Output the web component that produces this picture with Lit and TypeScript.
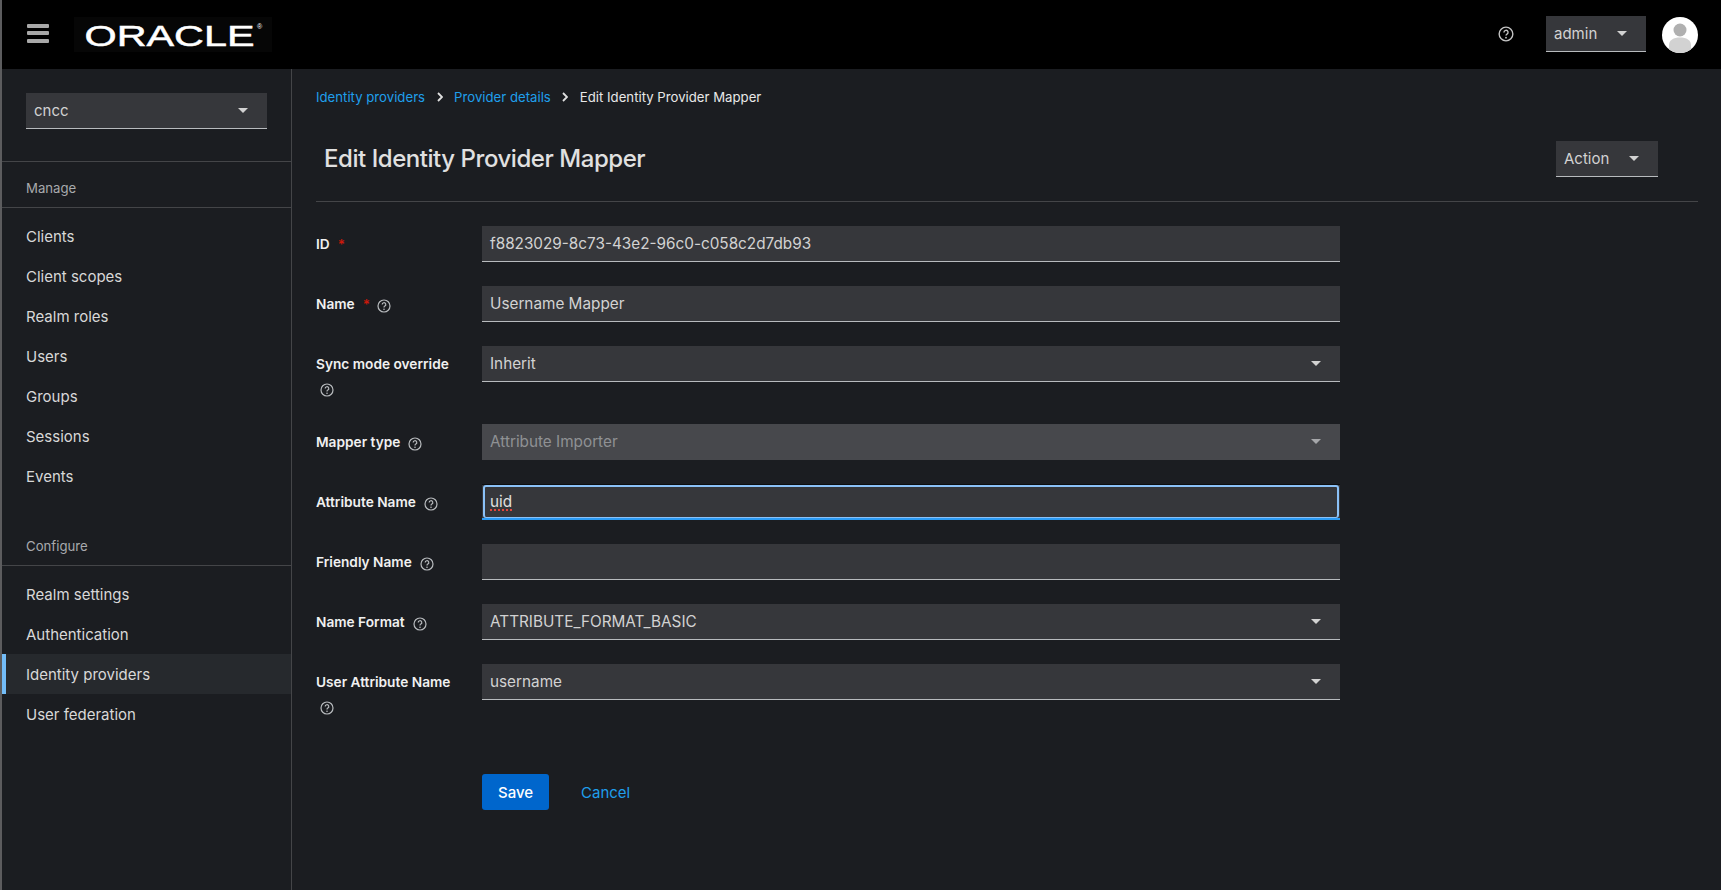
import { LitElement, html, css } from "lit";
import { customElement } from "lit/decorators.js";

const help = html`<svg class="help" viewBox="0 0 14 14" aria-hidden="true"><circle cx="7" cy="7" r="6" fill="none" stroke="currentColor" stroke-width="1.2"/><path d="M5.2 5.6a1.8 1.8 0 1 1 2.7 1.5c-.6.35-.9.6-.9 1.3" fill="none" stroke="currentColor" stroke-width="1.2"/><circle cx="7" cy="10.2" r=".8" fill="currentColor"/></svg>`;
const caret = html`<span class="caret"></span>`;

type Row = { label: string; req?: boolean; help?: boolean; value: string; kind?: "select" | "disabled" | "focus"; };
const rows: Row[] = [
  { label: "ID", req: true, value: "f8823029-8c73-43e2-96c0-c058c2d7db93" },
  { label: "Name", req: true, help: true, value: "Username Mapper" },
  { label: "Sync mode override", help: true, value: "Inherit", kind: "select" },
  { label: "Mapper type", help: true, value: "Attribute Importer", kind: "disabled" },
  { label: "Attribute Name", help: true, value: "uid", kind: "focus" },
  { label: "Friendly Name", help: true, value: "" },
  { label: "Name Format", help: true, value: "ATTRIBUTE_FORMAT_BASIC", kind: "select" },
  { label: "User Attribute Name", help: true, value: "username", kind: "select" },
];
const manage = ["Clients", "Client scopes", "Realm roles", "Users", "Groups", "Sessions", "Events"];
const configure = ["Realm settings", "Authentication", "Identity providers", "User federation"];

@customElement("app-root")
export class AppRoot extends LitElement {
  static styles = css`
    :host { display: block; height: 100vh; min-width: 1721px; box-sizing: border-box; border-left: 2px solid #5c5c5e; background: #1b1d21; color: #e0e0e0; font-family: Inter, "Liberation Sans", sans-serif; font-size: 16px; overflow: hidden; }
    .top { height: 69px; background: #000; display: flex; align-items: center; padding-left: 25px; box-sizing: border-box; }
    .burger { width: 22px; height: 19px; display: flex; flex-direction: column; justify-content: space-between; margin-top: -3px; }
    .burger i { height: 4px; background: #a8a8a8; display: block; border-radius: 1px; }
    .logo { width: 198px; height: 35px; margin-left: 25px; background: #060606; display: block; }
    .logo text { font-family: "Liberation Sans", sans-serif; fill: #fff; }
    .logo .word { stroke: #fff; stroke-width: 0.5; }
    .spacer { flex: 1; }
    .top .help-top { width: 16px; height: 16px; color: #c4c4c4; margin-right: 32px; margin-top: -1px; display: block; }
    .top .sel { width: 100px; height: 36px; margin-right: 16px; margin-top: -1px; padding: 0 19px 0 8px; font-size: 15px; }
    .avatar { width: 36px; height: 36px; margin-right: 23px; display: block; }
    .body { display: flex; height: calc(100vh - 69px); }
    .side { width: 289px; border-right: 1px solid #444548; box-sizing: content-box; flex: none; }
    .sel { background: #36373b; border-bottom: 1px solid #b8bbbe; box-sizing: border-box; display: flex; align-items: center; justify-content: space-between; color: #d2d2d2; }
    .caret { width: 0; height: 0; border-left: 5px solid transparent; border-right: 5px solid transparent; border-top: 5px solid currentColor; display: block; flex: none; }
    .realm { margin: 24px 24px 0; height: 36px; padding: 0 19px 0 8px; font-size: 15px; }
    .sec { margin-top: 32px; border-top: 1px solid #444548; }
    .sec h2 { margin: 0; height: 39px; padding: 6px 0 0 24px; border-bottom: 1px solid #444548; font-size: 13.2px; font-weight: 400; color: #a8aaad; display: flex; align-items: center; box-sizing: content-box; }
    .sec.b { margin-top: 0; border-top: none; padding-top: 24px; }
    .items { padding-top: 8px; }
    .item { height: 40px; padding-left: 24px; display: flex; align-items: center; font-size: 15px; color: #d8d8d8; }
    .item.on { background: #26292d; box-shadow: inset 4px 0 0 #73bcf7; }
    .main { flex: 1; padding: 0 23px 0 24px; min-width: 0; }
    .crumbs { height: 56px; display: flex; align-items: center; font-size: 13.2px; color: #e8e8e8; }
    .crumbs a { color: #1f9fec; }
    .crumbs svg { width: 6px; height: 10px; margin: 0 11.5px; display: block; color: #e0e0e0; }
    .head { height: 77px; display: flex; align-items: center; justify-content: space-between; border-bottom: 1px solid #444548; padding: 0 40px 9px 8px; box-sizing: border-box; }
    .head h1 { margin: 0; font-size: 24px; font-weight: 500; letter-spacing: -0.45px; color: #e0e0e0; }
    .action { width: 102px; height: 36px; padding: 0 19px 0 8px; font-size: 15px; }
    .form { display: grid; grid-template-columns: 166px 858px; row-gap: 24px; margin-top: 24px; align-items: start; }
    .lab { padding: 8px 0 2px; width: 150px; display: flex; flex-wrap: wrap; row-gap: 4px; align-items: center; font-size: 13.7px; font-weight: 600; color: #f0f0f0; line-height: 20px; }
    .lab .t { margin-right: 4px; }
    .req { color: #c9190b; margin-left: 4px; margin-right: 2px; width: 8px; }
    .help { width: 14px; height: 14px; margin-block: 3px; color: #b8bbbe; margin-left: 4px; display: block; flex: none; position: relative; top: 2px; }
    .inp { position: relative; height: 36px; background: #36373b; border-bottom: 1px solid #b8bbbe; box-sizing: border-box; padding: 0 19px 0 8px; display: flex; align-items: center; justify-content: space-between; font-size: 15.3px; color: #d2d2d2; }
    .inp.disabled { background: #47484c; border-bottom-color: transparent; color: #8f9194; }
    .inp.disabled .caret { color: #a6a7aa; }
    .inp.focus { border-bottom: 2px solid #2b9af3; color: #e0e0e0; box-shadow: inset 0 1px 0 #0c0d0f; }
    .inp.focus::before { content: ""; position: absolute; inset: 1px 1px 0 1px; border: 2px solid #8bc1f7; border-bottom-width: 1px; border-radius: 3px; pointer-events: none; }
    .spell { position: relative; }
    .spell::after { content: ""; position: absolute; left: 0; right: 0; bottom: 0; height: 1.5px; background: repeating-linear-gradient(90deg, #e2453c 0 2px, transparent 2px 4px); }
    .acts { grid-column: 2; display: flex; align-items: center; margin-top: 32px; gap: 32px; }
    .save { width: 67px; height: 36px; background: #06c; color: #fff; border-radius: 3px; display: flex; align-items: center; justify-content: center; font-size: 15px; font-weight: 500; }
    .cancel { color: #1f9fec; font-size: 15px; }
  `;

  renderRow(r: Row) {
    return html`
      <div class="lab"><span class="t">${r.label}</span>${r.req ? html`<span class="req">*</span>` : ""}${r.help ? help : ""}</div>
      <div class="inp ${r.kind ?? ""}">
        <span class=${r.kind === "focus" ? "spell" : ""}>${r.value}</span>
        ${r.kind === "select" || r.kind === "disabled" ? caret : ""}
      </div>`;
  }

  render() {
    const chev = html`<svg viewBox="0 0 6 10"><path d="M1 1l4 4-4 4" fill="none" stroke="currentColor" stroke-width="1.8"/></svg>`;
    return html`
      <div class="top">
        <div class="burger"><i></i><i></i><i></i></div>
        <svg class="logo" viewBox="0 0 198 35" aria-label="Oracle">
          <text class="word" x="10.5" y="29" font-size="30" textLength="170" lengthAdjust="spacingAndGlyphs">ORACLE</text>
          <text x="183" y="12" font-size="7">®</text>
        </svg>
        <div class="spacer"></div>
        <svg class="help-top" viewBox="0 0 14 14"><circle cx="7" cy="7" r="6" fill="none" stroke="currentColor" stroke-width="1.2"/><path d="M5.2 5.6a1.8 1.8 0 1 1 2.7 1.5c-.6.35-.9.6-.9 1.3" fill="none" stroke="currentColor" stroke-width="1.2"/><circle cx="7" cy="10.2" r=".8" fill="currentColor"/></svg>
        <div class="sel">admin ${caret}</div>
        <svg class="avatar" viewBox="0 0 36 36"><defs><clipPath id="c"><circle cx="18" cy="18" r="18"/></clipPath></defs><g clip-path="url(#c)"><rect width="36" height="36" fill="#fff"/><circle cx="18" cy="13" r="6.5" fill="#b0b0b0"/><path d="M7 36v-8c0-5 4.5-7.5 11-7.5S29 23 29 28v8z" fill="#d2d2d2"/></g></svg>
      </div>
      <div class="body">
        <aside class="side">
          <div class="sel realm">cncc ${caret}</div>
          <div class="sec"><h2>Manage</h2><div class="items">${manage.map((m) => html`<div class="item">${m}</div>`)}</div></div>
          <div class="sec b"><h2>Configure</h2><div class="items">${configure.map((m) => html`<div class="item ${m === "Identity providers" ? "on" : ""}">${m}</div>`)}</div></div>
        </aside>
        <main class="main">
          <nav class="crumbs"><a>Identity providers</a>${chev}<a>Provider details</a>${chev}<span>Edit Identity Provider Mapper</span></nav>
          <div class="head"><h1>Edit Identity Provider Mapper</h1><div class="sel action">Action ${caret}</div></div>
          <div class="form">
            ${rows.map((r) => this.renderRow(r))}
            <div class="acts"><div class="save">Save</div><div class="cancel">Cancel</div></div>
          </div>
        </main>
      </div>`;
  }
}
